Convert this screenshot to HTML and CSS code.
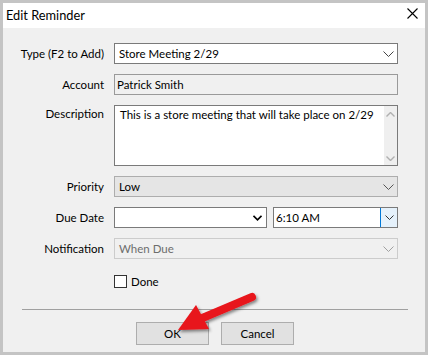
FILE: index.html
```html
<!DOCTYPE html>
<html lang="en">
<head>
    <meta charset="UTF-8">
    <title>Edit Reminder</title>
    <link rel="stylesheet" href="styles.css">
</head>
<body>

<!-- Edit Reminder dialog -->
<div class="dialog">
    <div class="title-bar">
        <span class="title">Edit Reminder</span>
        <svg class="close" width="11" height="11" viewBox="0 0 11 11">
            <path d="M0.5 0.5 L10.5 10.5 M10.5 0.5 L0.5 10.5" stroke="#000" stroke-width="1.1" fill="none"/>
        </svg>
    </div>

    <div class="form">
        <label class="label">Type (F2 to Add)</label>
        <div class="field combo">
            <span class="value">Store Meeting 2/29</span>
            <svg class="chev" width="11" height="6" viewBox="0 0 11 6"><polyline points="0.5,0.5 5.5,5.5 10.5,0.5" fill="none" stroke="#444" stroke-width="1"/></svg>
        </div>

        <label class="label">Account</label>
        <div class="field readonly">
            <span class="value">Patrick Smith</span>
        </div>

        <label class="label top">Description</label>
        <div class="field memo">
            <span class="memo-text">This is a store meeting that will take place on 2/29</span>
            <div class="scroll">
                <svg width="9" height="5" viewBox="0 0 9 5"><polyline points="0.5,4.5 4.5,0.5 8.5,4.5" fill="none" stroke="#b0b0b0" stroke-width="1.4"/></svg>
                <svg width="9" height="5" viewBox="0 0 9 5"><polyline points="0.5,0.5 4.5,4.5 8.5,0.5" fill="none" stroke="#b0b0b0" stroke-width="1.4"/></svg>
            </div>
        </div>

        <label class="label">Priority</label>
        <div class="field combo locked">
            <span class="value">Low</span>
            <svg class="chev" width="11" height="6" viewBox="0 0 11 6"><polyline points="0.5,0.5 5.5,5.5 10.5,0.5" fill="none" stroke="#555" stroke-width="1"/></svg>
        </div>

        <label class="label">Due Date</label>
        <div class="due">
            <div class="field combo date">
                <span class="value"></span>
                <svg class="chev" width="9" height="6" viewBox="0 0 9 6"><polyline points="0.5,0.8 4.5,4.8 8.5,0.8" fill="none" stroke="#000" stroke-width="1.6"/></svg>
            </div>
            <div class="field time">
                <span class="value">6:10 AM</span>
                <div class="drop-btn">
                    <svg width="9" height="5" viewBox="0 0 9 5"><polyline points="0.5,0.5 4.5,4.5 8.5,0.5" fill="none" stroke="#333" stroke-width="1"/></svg>
                </div>
            </div>
        </div>

        <label class="label">Notification</label>
        <div class="field combo disabled">
            <span class="value">When Due</span>
            <svg class="chev" width="11" height="6" viewBox="0 0 11 6"><polyline points="0.5,0.5 5.5,5.5 10.5,0.5" fill="none" stroke="#a0a0a0" stroke-width="1"/></svg>
        </div>

        <span></span>
        <div class="check-row">
            <span class="check"></span>
            <span>Done</span>
        </div>
    </div>

    <div class="separator"></div>

    <div class="buttons">
        <button class="btn">OK</button>
        <button class="btn">Cancel</button>
    </div>

    <!-- red pointer arrow laid over the OK button -->
    <svg class="pointer" width="428" height="355" viewBox="0 0 428 355">
        <defs>
            <filter id="shade" x="-20%" y="-20%" width="140%" height="140%">
                <feDropShadow dx="1.5" dy="2" stdDeviation="1.5" flood-color="#000" flood-opacity="0.45"/>
            </filter>
        </defs>
        <g filter="url(#shade)" fill="#e8141b">
            <line x1="252" y1="297" x2="200" y2="319" stroke="#e8141b" stroke-width="8" stroke-linecap="round"/>
            <polygon points="178,330 196,305 209,329"/>
        </g>
    </svg>
</div>

</body>
</html>
```

FILE: styles.css
```css
body {
    margin: 0;
    font-family: Lato, "Noto Sans", sans-serif;
    font-size: 11.5px;
    color: #000;
}

.dialog {
    position: relative;
    width: 422px;
    height: 349px;
    border: 3px solid #c4c4c4;
    background: #f0f0f0;
    display: flex;
    flex-direction: column;
}

.title-bar {
    height: 25px;
    background: #fff;
    display: flex;
    align-items: center;
    justify-content: space-between;
    padding: 0 7px 0 3px;
}

.title {
    margin-top: -2px;
    font-size: 12.8px;
}

.close {
    margin-top: -4px;
}

/* form grid: label column + field column */
.form {
    display: grid;
    grid-template-columns: 101px 284px;
    column-gap: 10px;
    row-gap: 10px;
    padding-top: 15px;
}

.label {
    text-align: right;
    align-self: center;
    color: #000;
}

.label.top {
    align-self: start;
    padding-top: 2px;
}

.field {
    height: 21px;
    box-sizing: border-box;
    border: 1px solid #7a7a7a;
    background: #fff;
    display: flex;
    align-items: center;
    padding-left: 4px;
}

.value {
    flex: 1;
    white-space: nowrap;
}

.chev {
    margin-right: 3px;
}

.readonly {
    background: #f0f0f0;
    border-color: #9a9a9a;
    padding-left: 2px;
}

.memo {
    height: 61px;
    align-items: stretch;
    padding-left: 5px;
}

.memo-text {
    flex: 1;
    padding-top: 2px;
}

.scroll {
    width: 13px;
    background: #efefef;
    display: flex;
    flex-direction: column;
    justify-content: space-between;
    align-items: center;
    padding: 6px 0 4px;
}

.locked {
    background: #e5e5e5;
    border-color: #adadad;
}

.due {
    display: flex;
    gap: 6px;
}

.date {
    width: 153px;
}

.date .chev {
    margin-right: 4px;
}

.time {
    flex: 1;
    padding-left: 2px;
    align-items: stretch;
}

.time .value {
    align-self: center;
}

.drop-btn {
    width: 16px;
    background: #e5f1fb;
    border-left: 1px solid #0078d7;
    display: flex;
    align-items: center;
    justify-content: center;
}

.disabled {
    background: #f0f0f0;
    border-color: #cccccc;
    color: #6d6d6d;
}

.check-row {
    display: flex;
    align-items: center;
    gap: 4px;
    margin-top: 6px;
}

.check {
    width: 13px;
    height: 13px;
    box-sizing: border-box;
    border: 1px solid #333;
    background: #fff;
}

.separator {
    margin: 21px 17px 0 19px;
    height: 1px;
    background: #a0a0a0;
}

.buttons {
    display: flex;
    justify-content: center;
    gap: 12px;
    margin-top: 12px;
    padding-left: 2px;
}

.btn {
    width: 73px;
    height: 23px;
    border: 1px solid #adadad;
    background: #e1e1e1;
    font-family: inherit;
    font-size: 11.5px;
    color: #000;
    padding: 0;
}

.pointer {
    position: absolute;
    left: -3px;
    top: -3px;
    pointer-events: none;
}
```
